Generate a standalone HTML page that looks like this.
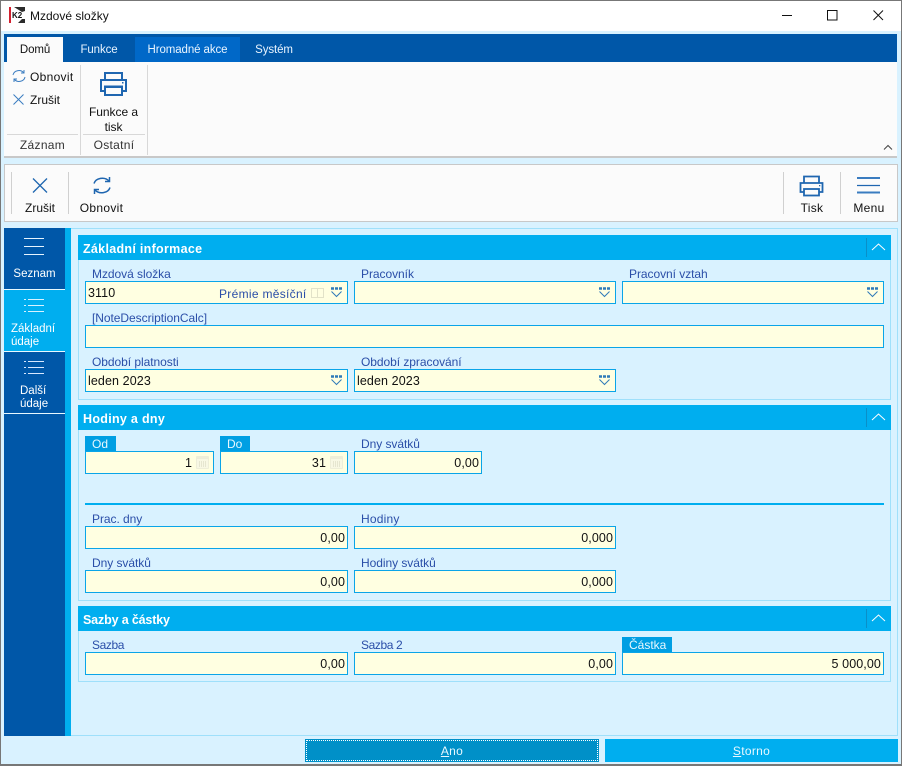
<!DOCTYPE html>
<html><head><meta charset="utf-8">
<style>
html,body{margin:0;padding:0}
body{width:902px;height:766px;position:relative;overflow:hidden;background:#d9f2ff;font-family:"Liberation Sans",sans-serif;font-size:12px;letter-spacing:.3px;color:#111}
div,span,svg{position:absolute;box-sizing:border-box}
.t{white-space:nowrap;line-height:15px}
.ctr{text-align:center}
.rt{font-size:11.5px;letter-spacing:-.1px}
.lb{white-space:nowrap;line-height:15px;color:#2a4ea8;letter-spacing:-.05px}
.f{background:#ffffe1;border:1px solid #0aa5e8;height:23px;line-height:23px;padding:0 2px;white-space:nowrap;font-size:12.5px;letter-spacing:.1px}
.r{text-align:right}
.tab{background:#009fe3;color:#e8f8ff;height:15px;line-height:16px;padding-left:7px;letter-spacing:0}
.sec{background:#00aeef;height:25px;left:78px;width:813px;color:#fff;font-weight:bold;line-height:29px;padding-left:5px;font-size:12.5px}
.box{left:78px;width:813px;border:1px solid #9fe0fb;border-top:0}
.w{color:#fff}
</style></head><body>
<div style="left:0;top:0;width:902px;height:31px;background:#fff"></div>
<div style="left:0;top:0;width:902px;height:1px;background:#777"></div>
<div style="left:0;top:0;width:1px;height:766px;background:#777"></div>
<div style="left:901px;top:0;width:1px;height:766px;background:#777"></div>
<div style="left:0;top:764px;width:902px;height:2px;background:#777"></div>

<svg style="left:9px;top:7px" width="17" height="17" viewBox="0 0 17 17"><rect width="17" height="17" fill="#fff"/><rect x="0" y="0" width="2" height="16" fill="#d2202f"/><path d="M5 0h11v4l-3 1zM9 16l4-4h3v4z" fill="#2b2b2b"/><text x="3" y="11" font-family="Liberation Sans" font-weight="bold" font-size="8" letter-spacing="0" fill="#111">K2</text></svg>
<div class="t" style="left:30px;top:9px;letter-spacing:0;font-size:12px">Mzdové složky</div>
<svg style="left:780px;top:8px" width="110" height="16" viewBox="0 0 110 16"><path d="M2 7.500h10" stroke="#111"/><rect x="47.500" y="2.500" width="9.500" height="9.500" fill="none" stroke="#111"/><path d="M93.500 2.500l9.500 9.500M103 2.500L93.500 12" stroke="#111" fill="none"/></svg>

<!-- ribbon -->
<div style="left:4px;top:34px;width:893px;height:28px;background:#0057a8"></div>
<div style="left:7px;top:37px;width:56px;height:25px;background:#fbfbfb"></div>
<div style="left:135px;top:37px;width:105px;height:25px;background:#0068c8"></div>
<div class="t ctr rt" style="left:7px;top:43px;width:56px">Domů</div>
<div class="t w ctr rt" style="left:63px;top:43px;width:72px;color:#e8f4ff">Funkce</div>
<div class="t w ctr rt" style="left:135px;top:43px;width:105px;color:#e8f4ff">Hromadné akce</div>
<div class="t w ctr rt" style="left:240px;top:43px;width:68px;color:#e8f4ff">Systém</div>
<div style="left:4px;top:62px;width:893px;height:96px;background:#fbfbfb;border-bottom:2px solid #c8c8c8"></div>
<div style="left:80px;top:65px;width:1px;height:90px;background:#d8d8d8"></div>
<div style="left:147px;top:65px;width:1px;height:90px;background:#d8d8d8"></div>
<div style="left:7px;top:134px;width:71px;height:1px;background:#d8d8d8"></div>
<div style="left:83px;top:134px;width:62px;height:1px;background:#d8d8d8"></div>
<svg style="left:12px;top:69px" width="14" height="14" viewBox="0 0 14 14" fill="none" stroke="#3a7cc0"><path d="M1 6a6 5.500 0 0 1 10.500-2.500M13 8a6 5.500 0 0 1-10.500 2.500"/><path d="M12 1v3h-3M2 13v-3h3"/></svg>
<div class="t" style="left:30px;top:70px">Obnovit</div>
<svg style="left:12px;top:93px" width="14" height="14" viewBox="0 0 14 14" fill="none" stroke="#3a7cc0"><path d="M1.500 1.500l10 10M11.500 1.500l-10 10"/></svg>
<div class="t" style="left:30px;top:93px;letter-spacing:0">Zrušit</div>
<svg style="left:99px;top:71px" width="30" height="27" viewBox="0 0 30 27" fill="none" stroke="#1f66b0" stroke-width="2"><path d="M6 9V2h17v7M6 20H2V9h25v11h-4"/><rect x="6" y="16" width="17" height="8"/><path d="M5 15h19" stroke-width="1"/><rect x="23" y="11" width="1.500" height="1.500" fill="#1f66b0" stroke="none"/></svg>
<div class="t ctr" style="left:81px;top:105px;width:65px;line-height:15px;letter-spacing:-.05px">Funkce a<br>tisk</div>
<div class="t ctr" style="left:7px;top:138px;width:71px;color:#333">Záznam</div>
<div class="t ctr" style="left:83px;top:138px;width:62px;color:#333">Ostatní</div>
<svg style="left:883px;top:144px" width="10" height="7" viewBox="0 0 10 7" fill="none" stroke="#444"><path d="M1 5.500l4-4 4 4"/></svg>

<!-- toolbar -->
<div style="left:4px;top:164px;width:894px;height:58px;background:#fbfbfb;border:1px solid #c8c8c8"></div>
<div style="left:11px;top:172px;width:1px;height:42px;background:#d0d0d0"></div>
<div style="left:68px;top:172px;width:1px;height:42px;background:#d0d0d0"></div>
<div style="left:783px;top:172px;width:1px;height:42px;background:#d0d0d0"></div>
<div style="left:840px;top:172px;width:1px;height:42px;background:#d0d0d0"></div>
<svg style="left:31px;top:177px" width="18" height="17" viewBox="0 0 18 17" fill="none" stroke="#1f66b0" stroke-width="1.300"><path d="M2 1.500l14 14M16 1.500l-14 14"/></svg>
<svg style="left:92px;top:176px" width="20" height="19" viewBox="0 0 20 19" fill="none" stroke="#1f66b0" stroke-width="1.500"><path d="M2 7.500a8.500 7 0 0 1 15-2.500M18 11.500a8.500 7 0 0 1-15 2.500"/><path d="M17.500 1v4.500h-4.500M2.500 18v-4.500h4.500"/></svg>
<svg style="left:799px;top:175px" width="25" height="22" viewBox="0 0 25 22" fill="none" stroke="#1f66b0" stroke-width="1.800"><path d="M5 8V1.500h15V8M5 17H1.500V8h22v9H20"/><rect x="5" y="14" width="15" height="6.500"/><rect x="20" y="10" width="1.300" height="1.300" fill="#1f66b0" stroke="none"/></svg>
<svg style="left:857px;top:177px" width="24" height="17" viewBox="0 0 24 17"><path d="M0 1h23" stroke="#3a7cc0" stroke-width="2"/><path d="M0 8.500h23" stroke="#1f66b0" stroke-width="1.300"/><path d="M0 15.500h23" stroke="#3a7cc0" stroke-width="2"/></svg>
<div class="t ctr" style="left:12px;top:201px;width:56px;letter-spacing:0">Zrušit</div>
<div class="t ctr" style="left:69px;top:201px;width:65px">Obnovit</div>
<div class="t ctr" style="left:784px;top:201px;width:56px">Tisk</div>
<div class="t ctr" style="left:841px;top:201px;width:56px">Menu</div>

<!-- sidebar -->
<div style="left:4px;top:228px;width:61px;height:508px;background:#0057a8"></div>
<div style="left:65px;top:228px;width:6px;height:508px;background:#00aeef"></div>
<div style="left:71px;top:228px;width:827px;height:1px;background:#9fe0fb"></div>
<div style="left:71px;top:735px;width:827px;height:1px;background:#9fe0fb"></div>
<div style="left:897px;top:228px;width:1px;height:508px;background:#9fe0fb"></div>
<div style="left:4px;top:290px;width:61px;height:61px;background:#00aeef"></div>
<div style="left:4px;top:289px;width:61px;height:1px;background:#e8f8ff"></div>
<div style="left:4px;top:351px;width:61px;height:1px;background:#e8f8ff"></div>
<div style="left:4px;top:413px;width:61px;height:1px;background:#e8f8ff"></div>
<svg style="left:24px;top:238px" width="20" height="17" viewBox="0 0 20 17" stroke="#e6f4ff"><path d="M0 .500h20M0 8.500h20M0 16.500h20"/></svg>
<svg style="left:24px;top:299px" width="20" height="14" viewBox="0 0 20 14" stroke="#d8f2ff"><path d="M0 .500h2M4 .500h16M0 6.500h2M4 6.500h16M0 12.500h2M4 12.500h16"/></svg>
<svg style="left:24px;top:361px" width="20" height="14" viewBox="0 0 20 14" stroke="#d8e8ff"><path d="M0 .500h2M4 .500h16M0 6.500h2M4 6.500h16M0 12.500h2M4 12.500h16"/></svg>
<div class="t ctr w" style="left:4px;top:267px;width:61px;font-size:11.5px;letter-spacing:0">Seznam</div>
<div class="t w" style="left:11px;top:323px;line-height:13px;font-size:11.5px;letter-spacing:0">Základní<br>údaje</div>
<div class="t w" style="left:20px;top:385px;line-height:13px;font-size:11.5px;letter-spacing:0">Další<br>údaje</div>

<!-- section 1 -->
<div class="box" style="top:235px;height:165px"></div>
<div class="sec" style="top:235px">Základní informace</div>
<div class="box" style="top:405px;height:196px"></div>
<div class="sec" style="top:405px">Hodiny a dny</div>
<div class="box" style="top:606px;height:76px"></div>
<div class="sec" style="top:606px;letter-spacing:-.15px">Sazby a částky</div>
<svg style="left:866px;top:236px" width="25" height="23" viewBox="0 0 25 23" fill="none"><path d="M.5 2v19" stroke="#0a8fc8"/><path d="M6 14l6.500-6 6.500 6" stroke="#fff"/></svg>
<svg style="left:866px;top:406px" width="25" height="23" viewBox="0 0 25 23" fill="none"><path d="M.5 2v19" stroke="#0a8fc8"/><path d="M6 14l6.500-6 6.500 6" stroke="#fff"/></svg>
<svg style="left:866px;top:607px" width="25" height="23" viewBox="0 0 25 23" fill="none"><path d="M.5 2v19" stroke="#0a8fc8"/><path d="M6 14l6.500-6 6.500 6" stroke="#fff"/></svg>

<div class="lb" style="left:92px;top:267px">Mzdová složka</div>
<div class="lb" style="left:361px;top:267px">Pracovník</div>
<div class="lb" style="left:629px;top:267px">Pracovní vztah</div>
<div class="f" style="left:85px;top:281px;width:263px">3110</div>
<div class="lb" style="left:219px;top:287px;letter-spacing:.3px">Prémie měsíční</div>
<svg style="left:311px;top:287px" width="14" height="12" viewBox="0 0 14 12" fill="none" stroke="#e2e2c8"><rect x=".5" y="1.500" width="6" height="9"/><rect x="6.500" y="1.500" width="6" height="9"/></svg>
<div class="f" style="left:354px;top:281px;width:262px"></div>
<div class="f" style="left:622px;top:281px;width:262px"></div>
<div class="lb" style="left:92px;top:311px">[NoteDescriptionCalc]</div>
<div class="f" style="left:85px;top:325px;width:799px"></div>
<div class="lb" style="left:92px;top:355px">Období platnosti</div>
<div class="lb" style="left:361px;top:355px">Období zpracování</div>
<div class="f" style="left:85px;top:369px;width:263px">leden 2023</div>
<div class="f" style="left:354px;top:369px;width:262px">leden 2023</div>
<svg style="left:331px;top:287px" width="12" height="11" viewBox="0 0 12 11" fill="none"><path d="M0 1.500h3M4 1.500h3M8 1.500h3" stroke="#2f7ab8" stroke-width="2.500"/><path d="M.5 4.500l5 5 5-5" stroke="#2f7ab8"/></svg>
<svg style="left:599px;top:287px" width="12" height="11" viewBox="0 0 12 11" fill="none"><path d="M0 1.500h3M4 1.500h3M8 1.500h3" stroke="#2f7ab8" stroke-width="2.500"/><path d="M.5 4.500l5 5 5-5" stroke="#2f7ab8"/></svg>
<svg style="left:867px;top:287px" width="12" height="11" viewBox="0 0 12 11" fill="none"><path d="M0 1.500h3M4 1.500h3M8 1.500h3" stroke="#2f7ab8" stroke-width="2.500"/><path d="M.5 4.500l5 5 5-5" stroke="#2f7ab8"/></svg>
<svg style="left:331px;top:375px" width="12" height="11" viewBox="0 0 12 11" fill="none"><path d="M0 1.500h3M4 1.500h3M8 1.500h3" stroke="#2f7ab8" stroke-width="2.500"/><path d="M.5 4.500l5 5 5-5" stroke="#2f7ab8"/></svg>
<svg style="left:599px;top:375px" width="12" height="11" viewBox="0 0 12 11" fill="none"><path d="M0 1.500h3M4 1.500h3M8 1.500h3" stroke="#2f7ab8" stroke-width="2.500"/><path d="M.5 4.500l5 5 5-5" stroke="#2f7ab8"/></svg>

<!-- section 2 -->
<div class="tab" style="left:85px;top:436px;width:31px">Od</div>
<div class="tab" style="left:220px;top:436px;width:30px">Do</div>
<div class="lb" style="left:361px;top:437px">Dny svátků</div>
<div class="f r" style="left:85px;top:451px;width:129px;padding-right:21px">1</div>
<div class="f r" style="left:220px;top:451px;width:128px;padding-right:21px">31</div>
<div class="f r" style="left:354px;top:451px;width:128px">0,00</div>
<svg style="left:196px;top:456px" width="13" height="13" viewBox="0 0 13 13"><rect width="13" height="13" rx="1" fill="#eeeed8"/><rect x="1" y="3" width="11" height="9" fill="#f8f8e4"/><path d="M3 6h7M3 8h7M3 10h7" stroke="#d4d4bc" stroke-dasharray="1 1"/></svg>
<svg style="left:330px;top:456px" width="13" height="13" viewBox="0 0 13 13"><rect width="13" height="13" rx="1" fill="#eeeed8"/><rect x="1" y="3" width="11" height="9" fill="#f8f8e4"/><path d="M3 6h7M3 8h7M3 10h7" stroke="#d4d4bc" stroke-dasharray="1 1"/></svg>
<div style="left:85px;top:503px;width:799px;height:2px;background:#00aeef"></div>
<div class="lb" style="left:92px;top:512px">Prac. dny</div>
<div class="lb" style="left:361px;top:512px;letter-spacing:.2px">Hodiny</div>
<div class="f r" style="left:85px;top:526px;width:263px">0,00</div>
<div class="f r" style="left:354px;top:526px;width:262px">0,000</div>
<div class="lb" style="left:92px;top:556px">Dny svátků</div>
<div class="lb" style="left:361px;top:556px">Hodiny svátků</div>
<div class="f r" style="left:85px;top:570px;width:263px">0,00</div>
<div class="f r" style="left:354px;top:570px;width:262px">0,000</div>

<!-- section 3 -->
<div class="lb" style="left:92px;top:638px;letter-spacing:-.4px">Sazba</div>
<div class="lb" style="left:361px;top:638px;letter-spacing:-.4px">Sazba 2</div>
<div class="tab" style="left:622px;top:637px;width:50px">Částka</div>
<div class="f r" style="left:85px;top:652px;width:263px">0,00</div>
<div class="f r" style="left:354px;top:652px;width:262px">0,00</div>
<div class="f r" style="left:622px;top:652px;width:262px">5 000,00</div>

<!-- buttons -->
<div class="ctr w" style="left:305px;top:739px;width:294px;height:23px;background:#0090c8;line-height:25px;outline:1px dotted #fff;outline-offset:-2px;color:#e8f8ff"><u>A</u>no</div>
<div class="ctr w" style="left:605px;top:739px;width:293px;height:23px;background:#00aeef;line-height:25px;color:#e8f8ff"><u>S</u>torno</div>
</body></html>
